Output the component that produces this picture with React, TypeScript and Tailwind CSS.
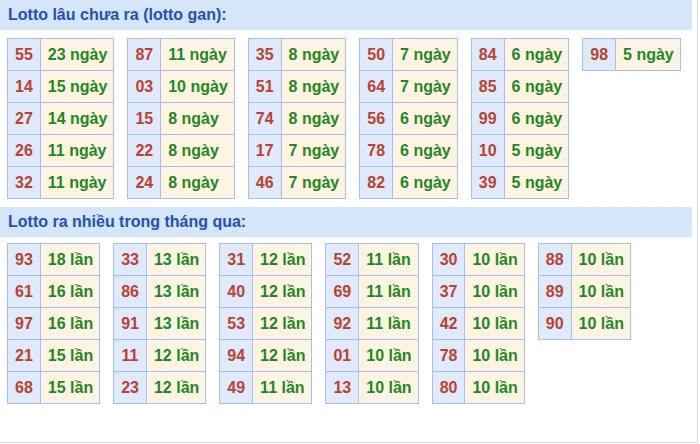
import React from "react";

type Row = [string, string];

const gan: Row[][] = [
  [["55", "23 ngày"], ["14", "15 ngày"], ["27", "14 ngày"], ["26", "11 ngày"], ["32", "11 ngày"]],
  [["87", "11 ngày"], ["03", "10 ngày"], ["15", "8 ngày"], ["22", "8 ngày"], ["24", "8 ngày"]],
  [["35", "8 ngày"], ["51", "8 ngày"], ["74", "8 ngày"], ["17", "7 ngày"], ["46", "7 ngày"]],
  [["50", "7 ngày"], ["64", "7 ngày"], ["56", "6 ngày"], ["78", "6 ngày"], ["82", "6 ngày"]],
  [["84", "6 ngày"], ["85", "6 ngày"], ["99", "6 ngày"], ["10", "5 ngày"], ["39", "5 ngày"]],
  [["98", "5 ngày"]],
];

const nhieu: Row[][] = [
  [["93", "18 lần"], ["61", "16 lần"], ["97", "16 lần"], ["21", "15 lần"], ["68", "15 lần"]],
  [["33", "13 lần"], ["86", "13 lần"], ["91", "13 lần"], ["11", "12 lần"], ["23", "12 lần"]],
  [["31", "12 lần"], ["40", "12 lần"], ["53", "12 lần"], ["94", "12 lần"], ["49", "11 lần"]],
  [["52", "11 lần"], ["69", "11 lần"], ["92", "11 lần"], ["01", "10 lần"], ["13", "10 lần"]],
  [["30", "10 lần"], ["37", "10 lần"], ["42", "10 lần"], ["78", "10 lần"], ["80", "10 lần"]],
  [["88", "10 lần"], ["89", "10 lần"], ["90", "10 lần"]],
];

function Table({ rows }: { rows: Row[] }) {
  return (
    <div className="inline-grid grid-cols-[auto_auto] border-l border-t border-[#aabdee]">
      {rows.map(([n, t], i) => (
        <React.Fragment key={i}>
          <div className="h-[32px] flex items-center justify-center border-r border-b border-[#aabdee] bg-[#dfeafc] px-[7px] text-[#c1402b]">
            {n}
          </div>
          <div className="h-[32px] flex items-center border-r border-b border-[#aabdee] bg-[#fef4e4] pl-[7px] pr-[6px] text-[#1c8a1c]">
            {t}
          </div>
        </React.Fragment>
      ))}
    </div>
  );
}

function Header({ children }: { children: React.ReactNode }) {
  return (
    <div className="h-[30px] bg-[#d5e6fb] pl-[8px] flex items-center text-[16px] font-bold text-[#1f4fc0]">
      {children}
    </div>
  );
}

export default function App() {
  return (
    <div
      className="w-[698px] h-[443px] border-r border-b border-[#dddddd] bg-white pr-[5px]"
      style={{ fontFamily: '"Liberation Sans", Arial, sans-serif' }}
    >
      <Header>Lotto lâu chưa ra (lotto gan):</Header>
      <div className="flex items-start gap-x-[13px] pl-[7px] pt-[8px] text-[16px] font-bold">
        {gan.map((r, i) => (
          <Table key={i} rows={r} />
        ))}
      </div>
      <div className="mt-[8px]">
        <Header>Lotto ra nhiều trong tháng qua:</Header>
      </div>
      <div className="flex items-start gap-x-[13px] pl-[7px] pt-[6px] text-[16px] font-bold">
        {nhieu.map((r, i) => (
          <Table key={i} rows={r} />
        ))}
      </div>
    </div>
  );
}
